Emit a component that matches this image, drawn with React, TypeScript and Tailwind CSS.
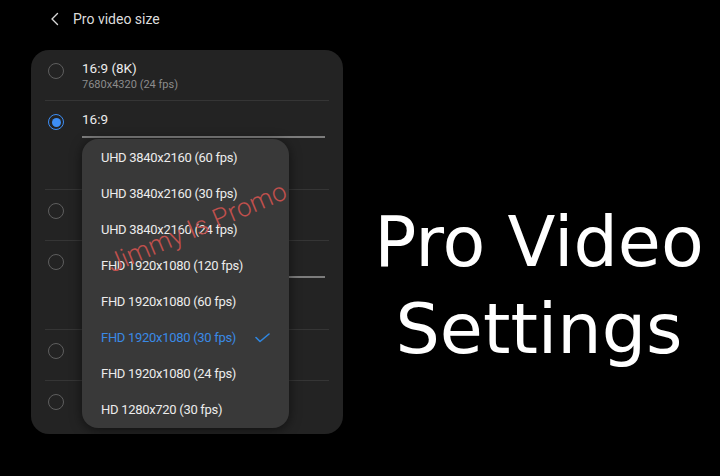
import React from 'react';

const options = [
  'UHD 3840x2160 (60 fps)',
  'UHD 3840x2160 (30 fps)',
  'UHD 3840x2160 (24 fps)',
  'FHD 1920x1080 (120 fps)',
  'FHD 1920x1080 (60 fps)',
  'FHD 1920x1080 (30 fps)',
  'FHD 1920x1080 (24 fps)',
  'HD 1280x720 (30 fps)',
];
const selectedOption = 5;

function Radio({ checked }: { checked?: boolean }) {
  if (checked) {
    return (
      <div className="w-4 h-4 rounded-full border-[1.5px] border-[#3d8ef5] flex items-center justify-center">
        <div className="w-[9px] h-[9px] rounded-full bg-[#3d8ef5]" />
      </div>
    );
  }
  return <div className="w-4 h-4 rounded-full border-[1.5px] border-[#5e5e5e]" />;
}

function Divider() {
  return <div className="h-px mx-[14px] bg-[#353535]" />;
}

function Row({
  height,
  title,
  sub,
  checked,
  underline,
}: {
  height: string;
  title?: string;
  sub?: string;
  checked?: boolean;
  underline?: boolean;
}) {
  return (
    <div className={`flex ${height}`}>
      <div className="w-[51px] pl-[17px] pt-[13px] shrink-0">
        <Radio checked={checked} />
      </div>
      <div className="flex-1 pt-[9px] pr-[18px]">
        {/* title is hidden under the dropdown on most rows, keep the space */}
        <div className="h-[18px] text-[13.5px] leading-[18px] text-[#ececec]">{title}</div>
        {sub && <div className="text-[11px] leading-[16px] text-[#8c8c8c]">{sub}</div>}
        {underline && <div className="mt-[8px] h-[2px] bg-[#7c7c7c]" />}
      </div>
    </div>
  );
}

export default function App() {
  return (
    <div className="w-[720px] h-[476px] bg-black flex overflow-hidden" style={{ fontFamily: 'Roboto, "Noto Sans", sans-serif' }}>
      <div className="w-[343px] pl-[31px] shrink-0">
        <div className="h-[38px] flex items-center">
          <svg width="10" height="14" viewBox="0 0 10 14" className="ml-[19px]">
            <path d="M7.5 1.5 L2 7 L7.5 12.5" fill="none" stroke="#d8d8d8" strokeWidth="1.4" strokeLinecap="round" strokeLinejoin="round" />
          </svg>
          <span className="ml-[13px] text-[14px] text-[#dcdcdc]">Pro video size</span>
        </div>

        <div className="mt-[12px] relative w-[312px] h-[384px] rounded-[18px] bg-[#232323]">
          <Row height="h-[50px]" title="16:9 (8K)" sub="7680x4320 (24 fps)" />
          <Divider />
          <Row height="h-[88px]" title="16:9" checked underline />
          <Divider />
          <Row height="h-[50px]" />
          <Divider />
          <Row height="h-[88px]" underline />
          <Divider />
          <Row height="h-[50px]" />
          <Divider />
          <Row height="h-[52px]" />

          <div className="absolute left-[51px] top-[89px] w-[207px] h-[289px] pt-px pl-px rounded-[16px] bg-[#393939] shadow-[0_2px_12px_rgba(0,0,0,0.55)]">
            {options.map((opt, i) => (
              <div key={opt} className="h-[36px] flex items-center justify-between pl-[18px] pr-[19px]">
                <span className={`text-[13px] tracking-[-0.3px] ${i === selectedOption ? 'text-[#3a8ae6]' : 'text-[#ececec]'}`}>{opt}</span>
                {i === selectedOption && (
                  <svg width="15" height="10" viewBox="0 0 15 10">
                    <path d="M1 4.5 L5 8.5 L14 1" fill="none" stroke="#2f86e0" strokeWidth="1.6" strokeLinecap="round" strokeLinejoin="round" />
                  </svg>
                )}
              </div>
            ))}
          </div>

          {/* watermark */}
          <div className="absolute left-[46px] top-[161px] w-[240px] h-[32px] flex items-center justify-center -rotate-[23deg] text-[26px] font-light tracking-[0.3px] text-[#c0504d] whitespace-nowrap">
            Jimmy Is Promo
          </div>
        </div>
      </div>

      <div className="flex-1 pt-[199px] pl-[15px] text-center text-white text-[70px] leading-[87px]" style={{ fontFamily: '"DejaVu Sans", Verdana, sans-serif' }}>
        <div>Pro Video</div>
        <div>Settings</div>
      </div>
    </div>
  );
}
